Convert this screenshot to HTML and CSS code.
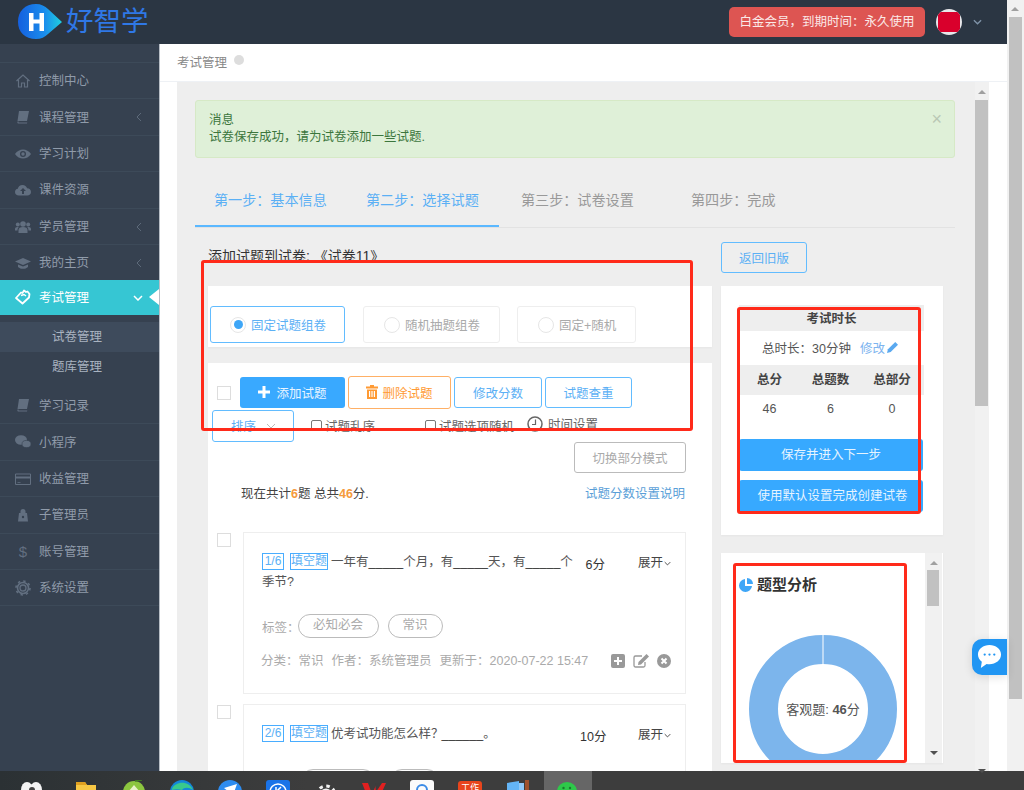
FILE: index.html
```html
<!DOCTYPE html>
<html lang="zh-CN">
<head>
<meta charset="utf-8">
<title>好智学 - 考试管理</title>
<link rel="stylesheet" href="styles.css">
</head>
<body>
<div class="app">
  <div class="window">
    <div class="page">
      <header class="topbar">
        <div class="logo">
          <svg class="logo-mark" viewBox="0 0 46 36" width="46" height="36">
            <defs><linearGradient id="lg" x1="0" y1="0" x2="1" y2="0"><stop offset="0" stop-color="#1560df"/><stop offset="0.6" stop-color="#1a8cec"/><stop offset="1" stop-color="#1fd0e0"/></linearGradient></defs>
            <path d="M19 0 C24 0 28 2 31 5 L45 18 L31 30 C28 33 24 35 19 35 C8 35 1 28 1 18 C1 7 8 0 19 0Z" fill="url(#lg)"/>
            <path d="M12 9h4.500v6.500h6V9H27v18h-4.500v-7.500h-6V27H12Z" fill="#fff"/>
          </svg>
          <span class="logo-text">好智学</span>
        </div>
        <div class="top-right">
          <span class="member">白金会员，到期时间：永久使用</span>
          <span class="avatar"><span class="avatar-in"></span></span>
          <svg class="top-chev" viewBox="0 0 10 6" width="9" height="6"><path d="M1 1l4 4 4-4" fill="none" stroke="#7f93a8" stroke-width="1.500"/></svg>
        </div>
      </header>
      <div class="shell">
        <aside class="sidebar">
          <ul class="menu">
            <li class="item"><svg class="mi" viewBox="0 0 16 16"><path d="M1.500 8L8 2l6.500 6M3.500 7v7h3v-4h3v4h3V7" fill="none" stroke="currentColor" stroke-width="1.200"/></svg>控制中心</li>
            <li class="item"><svg class="mi" viewBox="0 0 16 16"><path d="M4 2h10l-2 10H2.500zM2.500 12.500c-.500 1.500.3 2 1 2h8.500l.3-1H4c-.5 0-.6-.6-.2-1z" fill="currentColor"/></svg>课程管理<svg class="chev" viewBox="0 0 6 10"><path d="M5 1L1 5l4 4" fill="none" stroke="currentColor"/></svg></li>
            <li class="item"><svg class="mi" viewBox="0 0 16 16"><path d="M0 8c2-3 5-4.500 8-4.500S14 5 16 8c-2 3-5 4.500-8 4.500S2 11 0 8z" fill="currentColor"/><circle cx="8" cy="8" r="3" fill="#364150"/><circle cx="8" cy="8" r="1.700" fill="currentColor"/></svg>学习计划</li>
            <li class="item"><svg class="mi" viewBox="0 0 16 16"><path d="M4 13.500C1.500 13.500 0 12 0 10c0-1.800 1.200-3 2.800-3.200C3.200 4.500 5 3 7.500 3c2.300 0 4 1.300 4.600 3.200 2.300 0 3.900 1.700 3.900 3.700 0 2-1.600 3.600-3.700 3.600z" fill="currentColor"/><path d="M8 6L5 9h2v3h2V9h2z" fill="#364150"/></svg>课件资源</li>
            <li class="item"><svg class="mi" viewBox="0 0 16 16"><circle cx="8" cy="5" r="2.800" fill="currentColor"/><circle cx="2.800" cy="5.500" r="2" fill="currentColor"/><circle cx="13.200" cy="5.500" r="2" fill="currentColor"/><path d="M3.500 14v-3c0-1.800 1.500-3 4.500-3s4.500 1.200 4.500 3v3zM0 11.500V10c0-1.200.8-2 2.500-2 .5 0 1 .1 1.300.3C2.900 9 2.500 10 2.500 11.500zM16 11.500V10c0-1.200-.8-2-2.500-2-.5 0-1 .1-1.300.3.900.7 1.300 1.700 1.300 3.200z" fill="currentColor"/></svg>学员管理<svg class="chev" viewBox="0 0 6 10"><path d="M5 1L1 5l4 4" fill="none" stroke="currentColor"/></svg></li>
            <li class="item"><svg class="mi" viewBox="0 0 16 16"><path d="M8 3L0 6.500 8 10l8-3.500zM3 9.500v2.500c1.500 1.300 3 1.800 5 1.800s3.500-.5 5-1.800V9.500L8 11.500z" fill="currentColor"/></svg>我的主页<svg class="chev" viewBox="0 0 6 10"><path d="M5 1L1 5l4 4" fill="none" stroke="currentColor"/></svg></li>
            <li class="item item-active"><svg class="mi" viewBox="0 0 16 16"><path d="M1 9l5-5.500 1.500.5L9 1.500l2 1.500 1.500-.5 2 2.500-.5 3.500-6.500 6z" fill="none" stroke="#fff" stroke-width="1.800" stroke-linejoin="round"/><path d="M6 6.500l3-1 2 1.500" fill="none" stroke="#fff" stroke-width="1.500"/></svg>考试管理<svg class="chev chev-down" viewBox="0 0 10 6"><path d="M1 1l4 4 4-4" fill="none" stroke="#fff" stroke-width="1.500"/></svg><span class="notch"></span></li>
            <li class="sub">
              <div class="sub-item sub-on">试卷管理</div>
              <div class="sub-item">题库管理</div>
            </li>
            <li class="item"><svg class="mi" viewBox="0 0 16 16"><path d="M4 2h10l-2 10H2.500zM2.500 12.500c-.500 1.500.3 2 1 2h8.500l.3-1H4c-.5 0-.6-.6-.2-1z" fill="currentColor"/></svg>学习记录</li>
            <li class="item"><svg class="mi" viewBox="0 0 16 16"><ellipse cx="6" cy="6" rx="6" ry="4.800" fill="currentColor"/><ellipse cx="11.500" cy="10" rx="4.500" ry="3.600" fill="currentColor" stroke="#364150" stroke-width=".6"/></svg>小程序</li>
            <li class="item"><svg class="mi" viewBox="0 0 16 16"><path d="M.5 3h15v10.500H.5z" fill="none" stroke="currentColor"/><path d="M1 5.500h14v2H1zM2.500 11h3v.8h-3z" fill="currentColor"/></svg>收益管理</li>
            <li class="item"><svg class="mi" viewBox="0 0 16 16"><path d="M5.500 6V4.500a2.500 2.500 0 0 1 5 0V6h1.500l1 8.500H3L4 6z" fill="currentColor"/><circle cx="8" cy="10" r="1.200" fill="#364150"/></svg>子管理员</li>
            <li class="item"><span class="mi dollar">$</span>账号管理</li>
            <li class="item"><svg class="mi" viewBox="0 0 16 16"><circle cx="8" cy="8" r="3" fill="none" stroke="currentColor" stroke-width="1.300"/><circle cx="8" cy="8" r="5.500" fill="none" stroke="currentColor" stroke-width="1.600"/><circle cx="8" cy="8" r="7" fill="none" stroke="currentColor" stroke-width="1.600" stroke-dasharray="2.400 3.100"/></svg>系统设置</li>
          </ul>
        </aside>
        <main class="main">
          <div class="crumb"><span>考试管理</span><i class="crumb-dot"></i></div>
          <div class="work">
            <div class="content">
              <div class="alert">
                <div>消息</div>
                <div>试卷保存成功，请为试卷添加一些试题.</div>
                <span class="alert-x">×</span>
              </div>
              <nav class="tabs">
                <span class="tab tab-on">第一步：基本信息</span>
                <span class="tab tab-on">第二步：选择试题</span>
                <span class="tab tab-3">第三步：试卷设置</span>
                <span class="tab tab-4">第四步：完成</span>
              </nav>
              <div class="columns">
                <div class="left">
                  <h1 class="title">添加试题到试卷: 《试卷11》</h1>
                  <section class="mode-panel">
                    <label class="mode mode-on mode-a"><i class="radio"></i>固定试题组卷</label>
                    <label class="mode mode-b"><i class="radio"></i>随机抽题组卷</label>
                    <label class="mode mode-c"><i class="radio"></i>固定+随机</label>
                  </section>
                  <section class="list-panel">
                    <div class="row-actions">
                      <i class="check check-lg"></i>
                      <button class="btn btn-add"><svg viewBox="0 0 12 12" width="12" height="12"><path d="M4.500 0h3v4.500H12v3H7.500V12h-3V7.500H0v-3h4.500z" fill="#fff"/></svg>添加试题</button>
                      <button class="btn btn-del"><svg viewBox="0 0 12 14" width="12" height="14"><path d="M4 0h4v1.500h4v2H0v-2h4zM1 4.500h10V14H1zM3 6v6h1.200V6zM5.400 6v6h1.200V6zM7.800 6v6H9V6z" fill="#ff9a33" fill-rule="evenodd"/></svg>删除试题</button>
                      <button class="btn btn-line btn-score">修改分数</button>
                      <button class="btn btn-line btn-dup">试题查重</button>
                    </div>
                    <div class="row-options">
                      <span class="select">排序<svg viewBox="0 0 10 6" width="10" height="6"><path d="M1 1l4 4 4-4" fill="none" stroke="#bbb"/></svg></span>
                      <label class="opt opt-a"><i class="check"></i>试题乱序</label>
                      <label class="opt opt-b"><i class="check"></i>试题选项随机</label>
                      <label class="opt opt-c"><svg viewBox="0 0 16 16" width="16" height="16"><circle cx="8" cy="8" r="7" fill="none" stroke="#666" stroke-width="1.500"/><path d="M8.500 3.500V8.500H5" fill="none" stroke="#666" stroke-width="1.200"/></svg>时间设置</label>
                    </div>
                    <div class="row-switch"><button class="btn-switch">切换部分模式</button></div>
                    <div class="row-summary">
                      <span>现在共计<b>6</b>题 总共<b>46</b>分.</span>
                      <a class="link">试题分数设置说明</a>
                    </div>
                    <article class="question q-first">
                      <i class="check check-lg q-check"></i>
                      <div class="card">
                        <div class="q-head">
                          <p class="q-text"><span class="badge badge-n">1/6</span><span class="badge badge-t">填空题</span>一年有<span class="blank">_____</span>个月，有<span class="blank">_____</span>天，有<span class="blank">_____</span>个季节?</p>
                          <span class="q-score">6分</span>
                          <span class="q-open">展开<svg viewBox="0 0 10 6" width="7" height="5"><path d="M1 1l4 4 4-4" fill="none" stroke="#333" stroke-width="1.200"/></svg></span>
                        </div>
                        <div class="q-tags"><span>标签：</span><span class="pill pill-1">必知必会</span><span class="pill pill-2">常识</span></div>
                        <div class="q-meta">
                          <span>分类：常识</span><span>作者：系统管理员</span><span>更新于：2020-07-22 15:47</span>
                          <span class="q-tools">
                            <svg viewBox="0 0 14 14" width="14" height="14"><path d="M2 0h10a2 2 0 0 1 2 2v10a2 2 0 0 1-2 2H2a2 2 0 0 1-2-2V2a2 2 0 0 1 2-2zM6 3v3H3v2h3v3h2V8h3V6H8V3z" fill="#999" fill-rule="evenodd"/></svg>
                            <svg viewBox="0 0 16 14" width="16" height="14"><path d="M12 8v3.500A1.500 1.500 0 0 1 10.500 13h-8A1.500 1.500 0 0 1 1 11.500v-8A1.500 1.500 0 0 1 2.500 2H9" fill="none" stroke="#999" stroke-width="1.300"/><path d="M13.500 0L16 2.500 8 10.500 5 11l.5-3z" fill="#999"/></svg>
                            <svg viewBox="0 0 14 14" width="14" height="14"><circle cx="7" cy="7" r="7" fill="#999"/><path d="M4.500 4.500l5 5M9.500 4.500l-5 5" stroke="#fff" stroke-width="2"/></svg>
                          </span>
                        </div>
                      </div>
                    </article>
                    <article class="question">
                      <i class="check check-lg q-check"></i>
                      <div class="card">
                        <div class="q-head q-head-one">
                          <p class="q-text"><span class="badge badge-n">2/6</span><span class="badge badge-t">填空题</span>优考试功能怎么样？<span class="blank blank-s">______</span>。</p>
                          <span class="q-score">10分</span>
                          <span class="q-open">展开<svg viewBox="0 0 10 6" width="7" height="5"><path d="M1 1l4 4 4-4" fill="none" stroke="#333" stroke-width="1.200"/></svg></span>
                        </div>
                        <div class="q-tags q-tags-2"><span class="pill pill-3"></span><span class="pill pill-4"></span></div>
                      </div>
                    </article>
                  </section>
                </div>
                <div class="right">
                  <button class="btn-old">返回旧版</button>
                  <section class="side-card">
                    <div class="stat-head">考试时长</div>
                    <div class="stat-time">总时长：30分钟<a class="edit">修改<svg viewBox="0 0 12 12" width="11" height="11"><path d="M9 0l3 3-8 8-4 1 1-4z" fill="#5aa9f0"/></svg></a></div>
                    <div class="stat-grid stat-names"><span>总分</span><span>总题数</span><span>总部分</span></div>
                    <div class="stat-grid stat-vals"><span>46</span><span>6</span><span>0</span></div>
                    <button class="btn-next">保存并进入下一步</button>
                    <button class="btn-next btn-next-2">使用默认设置完成创建试卷</button>
                  </section>
                  <section class="chart-card">
                    <div class="chart-body">
                      <h2 class="chart-title"><svg viewBox="0 0 14 14" width="14" height="14"><path d="M6 1a6.500 6.500 0 1 0 7 7H6z" fill="#3ea6f7"/><path d="M8 0a6 6 0 0 1 6 6H8z" fill="#3ea6f7"/></svg>题型分析</h2>
                      <div class="donut">
                        <svg viewBox="0 0 148 148" width="148" height="148"><circle cx="74" cy="74" r="59.500" fill="none" stroke="#7cb5ec" stroke-width="29"/><path d="M74 0v29" stroke="#fff"/></svg>
                        <span class="donut-label">客观题: <b>46</b>分</span>
                      </div>
                    </div>
                    <div class="mini-scroll"><i class="arr arr-up"></i><i class="mini-thumb"></i><i class="arr arr-down"></i></div>
                  </section>
                </div>
              </div>
            </div>
            <div class="inner-scroll"><i class="arr arr-up"></i><i class="inner-thumb"></i><i class="arr arr-down"></i></div>
          </div>
        </main>
      </div>
    </div>
    <div class="page-scroll"><i class="arr arr-up"></i><i class="page-thumb"></i></div>
  </div>
  <footer class="taskbar">
    <span class="tb tb-first"><svg viewBox="0 0 24 24"><ellipse cx="8" cy="10" rx="6" ry="8" fill="#f4f4f4"/><ellipse cx="17" cy="10" rx="6" ry="8" fill="#f4f4f4"/><circle cx="13" cy="10" r="3" fill="#444"/></svg></span>
    <span class="tb"><svg viewBox="0 0 24 24"><path d="M2 2h9l2 3h9v17H2z" fill="#f7c744"/><path d="M2 2h9l2 3H2z" fill="#e0a020"/></svg></span>
    <span class="tb"><svg viewBox="0 0 24 24"><circle cx="12" cy="12" r="11" fill="#8cc63f"/><path d="M12 5l6 7H6z" fill="#e8f3c8"/><circle cx="12" cy="15" r="5" fill="#f0f7d8"/><path d="M13 1l7-1" stroke="#3f7d22" stroke-width="1.500"/></svg></span>
    <span class="tb"><svg viewBox="0 0 24 24"><circle cx="12" cy="12" r="12" fill="#1387d8"/><path d="M2 9C5 1 19 0 23 10c-4-3-9-3-11 0-3-1-7-1-10 0z" fill="#39c98c"/></svg></span>
    <span class="tb"><svg viewBox="0 0 24 24"><circle cx="12" cy="12" r="12" fill="#2d8cf0"/><path d="M6 8l13-4-5 14-3-6z" fill="#fff"/></svg></span>
    <span class="tb"><svg viewBox="0 0 24 24"><rect width="24" height="24" rx="3" fill="#1a73e8"/><circle cx="12" cy="12" r="8" fill="none" stroke="#fff" stroke-width="1.500"/><path d="M10 7v10M15 7l-5 5 5 5" fill="none" stroke="#fff" stroke-width="1.500"/></svg></span>
    <span class="tb"><svg viewBox="0 0 24 24"><circle cx="12" cy="15" r="5" fill="none" stroke="#f2f2f2" stroke-width="3"/><circle cx="12" cy="15" r="9" fill="none" stroke="#f2f2f2" stroke-width="3" stroke-dasharray="3.500 3.570"/></svg></span>
    <span class="tb"><svg viewBox="0 0 24 24"><path d="M0 3h6l4 11L15 3h9l-9 20H8z" fill="#e02020"/><path d="M13 3h7l-6 9z" fill="#3c3c3c"/></svg></span>
    <span class="tb"><svg viewBox="0 0 24 24"><rect width="24" height="24" rx="3" fill="#fbfbfb"/><circle cx="12" cy="10" r="5" fill="none" stroke="#3c8ce7" stroke-width="2"/><path d="M7 19c3-4 7-4 10 0" stroke="#e8503a" stroke-width="2" fill="none"/></svg></span>
    <span class="tb tb-work"><i>工作</i></span>
    <span class="tb"><svg viewBox="0 0 24 24"><path d="M1 3l12-2v22H1z" fill="#64b5f6"/><path d="M13 3h5v20h-5z" fill="#90caf9"/><path d="M19 0h4v22h-4z" fill="#a0522d"/></svg></span>
    <span class="tb tb-on"><svg viewBox="0 0 24 24"><ellipse cx="11" cy="11" rx="10" ry="9" fill="#2ec84a"/><circle cx="7.500" cy="8" r="1.200" fill="#1c7a2e"/><circle cx="14" cy="8" r="1.200" fill="#1c7a2e"/><circle cx="18" cy="16" r="6" fill="#f4f4f4"/></svg></span>
  </footer>
  <aside class="chat"><svg viewBox="0 0 26 26" width="25" height="25"><path d="M13 1c6.500 0 12 4 12 10s-5.500 10-12 10c-1 0-2-.1-3-.3L4 25l1-6.500C2.500 16.500 1 14 1 11 1 5 6.500 1 13 1z" fill="#fff"/><circle cx="8" cy="11" r="1.200" fill="#2196f3"/><circle cx="13" cy="11" r="1.200" fill="#2196f3"/><circle cx="18" cy="11" r="1.200" fill="#2196f3"/></svg></aside>
  <i class="mark mark-1"></i>
  <i class="mark mark-2"></i>
  <i class="mark mark-3"></i>
</div>
</body>
</html>
```
FILE: styles.css
```css
* { box-sizing: border-box; }
html, body { margin: 0; padding: 0; height: 100%; overflow: hidden; }
body { font-family: "Liberation Sans", "Noto Sans CJK SC", sans-serif; font-size: 12.5px; color: #555; background: #fff; }
ul { list-style: none; margin: 0; padding: 0; }
p, h1, h2 { margin: 0; font-weight: normal; }
button { font: inherit; cursor: pointer; background: none; padding: 0; }
i { font-style: normal; display: block; }

.app { position: relative; width: 1024px; height: 790px; overflow: hidden; display: flex; flex-direction: column; }
.window { height: 771px; display: flex; flex: none; }
.page { width: 1007px; display: flex; flex-direction: column; height: 771px; }

/* top bar */
.topbar { height: 44px; flex: none; background: #2b3643; display: flex; justify-content: space-between; align-items: center; padding: 0 25px 0 17px; }
.logo { display: flex; align-items: center; }
.logo-mark { flex: none; display: block; }
.logo-text { font-size: 27.5px; line-height: 36px; color: #2f78e6; margin-left: 3px; }
.top-right { display: flex; align-items: center; }
.member { width: 196px; height: 30px; line-height: 30px; text-align: center; background: #dd5552; color: #fbe9e8; border-radius: 5px; font-size: 12.5px; }
.avatar { width: 26px; height: 26px; margin-left: 11px; border-radius: 50%; background: #e7e7ea; overflow: hidden; display: flex; align-items: center; justify-content: center; }
.avatar-in { width: 22px; height: 20px; background: #d9002c; }
.top-chev { margin-left: 11px; }

/* sidebar */
.shell { flex: 1; display: flex; min-height: 0; }
.sidebar { width: 160px; flex: none; background: #364150; border-right: 1px solid #b8bec6; padding-top: 18px; color: #909baa; }
.menu { border-top: 1px solid #3d4a59; }
.item { position: relative; height: 36.4px; display: flex; align-items: center; padding: 0 0 2px 39px; border-bottom: 1px solid #3d4a59; }
.mi { position: absolute; left: 15px; top: 10px; width: 16px; height: 16px; color: #626f80; }
.dollar { font-size: 15px; line-height: 16px; text-align: center; }
.chev { position: absolute; left: 136px; top: 13px; width: 6px; height: 10px; color: #5d6a7a; }
.item-active { height: 35px; background: #36c6d3; color: #fff; border-bottom: 0; margin-top: -1px; }
.item-active .mi { top: 9px; }
.chev-down { left: 133px; top: 15px; width: 10px; height: 6px; }
.notch { position: absolute; right: 0; top: 9px; border: 8px solid transparent; border-left: 0; border-right: 10px solid #fff; }
.sub { padding: 7px 0 6px; }
.sub-item { height: 29.5px; line-height: 31.5px; padding-left: 52px; color: #a9b3c0; }
.sub-on { background: #3e4b5c; }
.sub + .item { height: 37px; }

/* main */
.main { flex: 1; min-width: 0; display: flex; flex-direction: column; background: #fff; }
.crumb { height: 38px; flex: none; border-bottom: 1px solid #eef1f5; display: flex; align-items: center; padding: 0 0 2px 17px; color: #888; }
.crumb-dot { width: 10px; height: 10px; border-radius: 50%; background: #ddd; margin: 0 0 3px 7px; }
.work { flex: 1; min-height: 0; display: flex; padding-left: 17px; }
.content { width: 798px; flex: none; background: #eee; padding: 18px 0 0 18px; overflow: hidden; }

.alert { position: relative; width: 760px; height: 58px; padding: 11px 13px; line-height: 17px; background: #dff0d8; border: 1px solid #d6e9c6; border-radius: 3px; color: #3c763d; }
.alert-x { position: absolute; right: 12px; top: 8px; font-size: 18px; line-height: 20px; color: #b9c7b4; }

.tabs { width: 760px; height: 70px; display: flex; padding-top: 22px; border-bottom: 1px solid #e2e2e2; }
.tab { height: 47px; padding: 10px 19px 0; font-size: 14.1px; line-height: 20px; color: #999; white-space: nowrap; }
.tab-on { color: #5bb0f5; border-bottom: 2px solid #5bb8ff; width: 152px; }
.tab-3 { margin-left: 3px; width: 152px; }
.tab-4 { margin-left: 18px; }

.columns { display: flex; padding: 14px 0 0 13px; }
.left { width: 504px; flex: none; }
.right { width: 222px; flex: none; margin-left: 9px; }
.title { height: 44px; padding-top: 5px; font-size: 14px; line-height: 18px; color: #333; white-space: nowrap; }

.mode-panel { height: 61px; background: #fff; display: flex; padding: 20px 0 0 2px; box-shadow: 0 1px 2px rgba(0,0,0,.04); }
.mode { height: 37px; display: flex; align-items: center; border: 1px solid #eee; border-radius: 3px; color: #aaa; }
.mode-a { width: 135px; padding-left: 19px; }
.mode-b { width: 137px; margin-left: 18px; padding-left: 20px; }
.mode-c { width: 119px; margin-left: 17px; padding-left: 20px; }
.radio { position: relative; width: 16px; height: 16px; border-radius: 50%; border: 1px solid #e6e6e6; margin-right: 5px; flex: none; }
.mode-on { border-color: #62bcff; color: #5bb0f5; }
.mode-on .radio::after { content: ""; position: absolute; left: 2.5px; top: 2.5px; width: 9px; height: 9px; border-radius: 50%; background: #3ea6f7; }

.list-panel { margin-top: 16px; background: #fff; height: 460px; padding-top: 13px; }
.row-actions { height: 33px; display: flex; align-items: center; padding-left: 9px; }
.check { width: 11px; height: 11px; border: 1px solid #777; border-radius: 2px; background: #fff; flex: none; }
.check-lg { width: 14px; height: 14px; border: 1px solid #ddd; border-radius: 0; }
.btn { height: 31px; border-radius: 3px; display: flex; align-items: center; justify-content: center; white-space: nowrap; padding-bottom: 1px; }
.btn-add { width: 105px; margin-left: 9px; background: #39a9ff; border: 0; color: #e9f5ff; gap: 6px; }
.btn-del { width: 103px; height: 33px; margin-left: 3px; border: 1px solid #ffb066; color: #ff9a33; gap: 4px; background: #fff; }
.btn-line { border: 1px solid #62bcff; color: #5bb0f5; background: #fff; margin-left: 3px; }
.btn-score { width: 88px; }
.btn-dup { width: 87px; }
.row-options { height: 33px; display: flex; align-items: center; padding-left: 4px; color: #666; }
.select { width: 82px; height: 32px; border: 1px solid #62bcff; border-radius: 3px; color: #5bb0f5; display: flex; align-items: center; gap: 10px; padding-left: 18px; }
.opt { display: flex; align-items: center; white-space: nowrap; }
.opt .check { margin-right: 3px; }
.opt-a { margin-left: 17px; }
.opt-b { margin-left: 50px; }
.opt-c { margin-left: 13px; gap: 5px; position: relative; top: -2px; }
.row-switch { height: 31px; display: flex; justify-content: flex-end; padding-right: 26px; }
.btn-switch { width: 112px; height: 31px; border: 1px solid #bbb; border-radius: 3px; color: #aaa; background: #fff; }
.row-summary { margin-top: 12px; height: 18px; line-height: 18px; display: flex; justify-content: space-between; padding: 0 27px 0 33px; color: #444; }
.row-summary b { font-weight: bold; color: #f59a3c; }
.link { color: #5b9fd8; }

.question { display: flex; margin-top: 10px; padding-left: 9px; }
.q-first { margin-top: 29px; }
.q-check { margin-top: 1px; }
.card { width: 443px; height: 162px; margin-left: 12px; flex: none; border: 1px solid #eee; padding: 19px 0 0 18px; }
.q-head { display: flex; align-items: flex-start; }
.q-text { width: 318px; flex: none; line-height: 20px; color: #555; }
.badge { display: inline-block; height: 17px; line-height: 15px; border: 1px solid #49adff; color: #5bb0f5; text-align: center; vertical-align: 1px; font-size: 12px; }
.badge-n { width: 22px; margin-right: 6px; }
.badge-t { width: 38px; margin-right: 3px; }
.blank { color: #333; }
.blank-s { margin-left: -2px; }
.q-score { width: 25px; flex: none; text-align: right; line-height: 20px; margin-top: 3px; color: #333; white-space: nowrap; }
.q-open { margin: 1px 0 0 33px; line-height: 20px; color: #444; white-space: nowrap; display: flex; align-items: center; gap: 1px; }
.q-tags { margin-top: 22px; height: 24px; display: flex; align-items: center; color: #aaa; }
.q-head-one { height: 20px; }
.q-tags-2 { margin-top: 25px; padding-left: 39px; }
.pill { height: 24px; line-height: 21px; border: 1px solid #bbb; border-radius: 12px; text-align: center; color: #aaa; }
.pill-1 { width: 81px; margin-left: -2px; }
.pill-2 { width: 55px; margin-left: 9px; }
.pill-3 { width: 74px; }
.pill-4 { width: 49px; margin-left: 15px; }
.q-meta { margin-top: 13px; display: flex; align-items: center; color: #aaa; white-space: nowrap; gap: 8px; line-height: 20px; margin-left: -1px; }
.q-tools { margin-left: 15px; display: flex; align-items: center; gap: 8px; }
.q-tools svg { display: block; }

.btn-old { display: block; width: 86px; height: 31px; border: 1px solid #62bcff; border-radius: 3px; color: #5bb0f5; }
.side-card { margin-top: 13px; height: 249px; background: #fff; padding: 19px 19px 0 18px; box-shadow: 0 1px 2px rgba(0,0,0,.04); }
.stat-head { height: 26px; line-height: 28px; background: #eee; text-align: center; font-weight: bold; color: #444; }
.stat-time { height: 34px; display: flex; align-items: center; justify-content: center; color: #555; padding: 0 3px 1px 0; }
.edit { color: #7db4ef; margin-left: 9px; display: flex; align-items: center; gap: 2px; }
.stat-grid { display: grid; grid-template-columns: 61px 61px 62px; text-align: center; }
.stat-names { height: 30px; line-height: 30px; background: #eee; font-weight: bold; color: #444; }
.stat-vals { height: 28px; line-height: 28px; margin-bottom: 16px; color: #555; }
.btn-next { display: block; width: 184px; height: 32px; border: 0; border-radius: 3px; background: #37a9ff; color: #e6f4ff; padding-bottom: 3px; }
.btn-next-2 { margin-top: 9px; padding-left: 3px; }

.chart-card { position: relative; margin-top: 18px; height: 210px; background: #fff; display: flex; box-shadow: 0 1px 2px rgba(0,0,0,.04); overflow: hidden; }
.chart-body { width: 204px; flex: none; padding: 23px 0 0 18px; overflow: hidden; }
.chart-title { display: flex; align-items: center; gap: 4px; font-size: 15px; font-weight: bold; color: #333; line-height: 18px; }
.donut { position: relative; margin: 41px 0 0 10px; width: 148px; height: 148px; }
.donut svg { display: block; }
.donut-label { position: absolute; left: 0; right: 0; top: 66px; text-align: center; color: #555; line-height: 18px; font-size: 13px; }
.donut-label b { font-weight: bold; }
.mini-scroll { width: 17px; background: #f1f1f1; position: relative; margin-left: 0; }
.mini-thumb { position: absolute; left: 2px; right: 3px; top: 17px; height: 36px; background: #c1c1c1; }
.mini-scroll .arr-up { position: absolute; left: 5px; top: 8px; }
.mini-scroll .arr-down { position: absolute; left: 5px; bottom: 8px; }

.arr { width: 0; height: 0; border-left: 4px solid transparent; border-right: 4px solid transparent; }
.arr-up { border-bottom: 4px solid #a0a0a0; }
.arr-down { border-top: 4px solid #505050; }

.inner-scroll { position: relative; width: 14px; flex: none; background: #f1f1f1; }
.inner-scroll .arr-up { position: absolute; left: 3px; top: 8px; }
.inner-scroll .arr-down { position: absolute; left: 3px; bottom: -2px; }
.inner-thumb { position: absolute; left: 0; right: 1px; top: 18px; height: 306px; background: #c1c1c1; }

.page-scroll { position: relative; width: 17px; flex: none; background: #f1f1f1; }
.page-scroll .arr-up { position: absolute; left: 4px; top: 7px; }
.page-thumb { position: absolute; left: 2px; right: 2px; top: 17px; height: 682px; background: #c1c1c1; }

/* taskbar */
.taskbar { height: 19px; flex: none; background: linear-gradient(90deg, #2b3134, #3d3d3d 30%); display: flex; overflow: hidden; padding-left: 7px; }
.tb { width: 48px; height: 40px; padding: 9px 12px 0; flex: none; }
.tb svg { display: block; width: 24px; height: 24px; }
.tb-first { margin-right: 7px; }
.tb-on { background: #666; margin-left: 2px; }
.tb-work i { width: 24px; height: 24px; border-radius: 3px; background: #e8451c; color: #fff; font-size: 9px; line-height: 14px; text-align: center; margin-top: 1px; }

/* overlays */
.chat { position: absolute; left: 972px; top: 639px; width: 35px; height: 36px; background: #2196f3; border-radius: 10px 0 0 10px; box-shadow: 0 2px 10px rgba(0,0,0,.12); padding: 5px 0 0 5px; }
.chat svg { display: block; }
.mark { position: absolute; border: 3px solid #ff2a1a; border-radius: 3px; }
.mark-1 { left: 201px; top: 260px; width: 492px; height: 171px; }
.mark-2 { left: 737px; top: 307px; width: 184px; height: 207px; }
.mark-3 { left: 733px; top: 563px; width: 174px; height: 200px; }
```
